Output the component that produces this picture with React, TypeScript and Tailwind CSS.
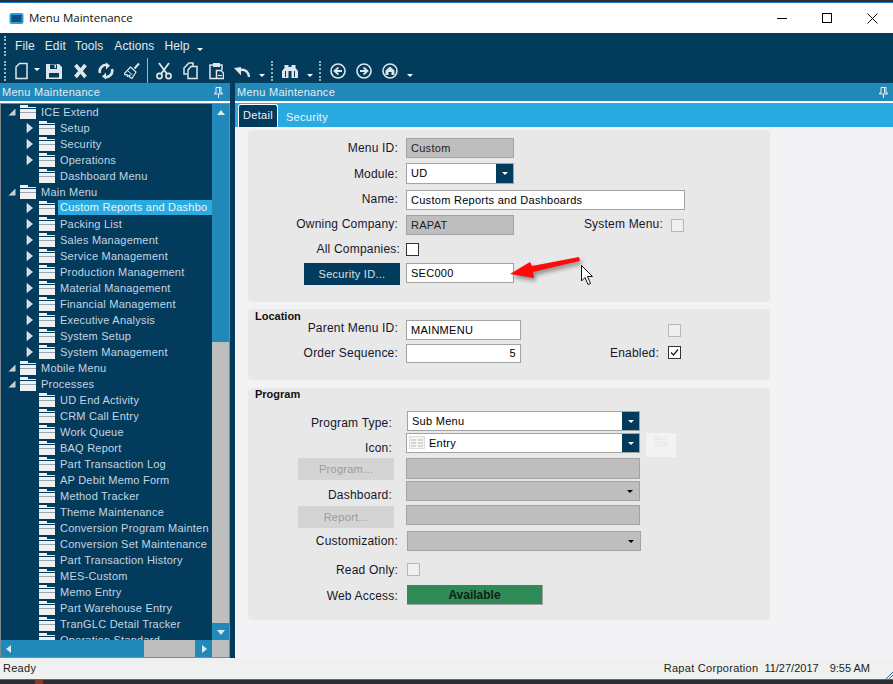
import React from "react";

const Caret = ({ cls = "border-t-white" }: { cls?: string }) => (
  <span className={`inline-block w-0 h-0 border-l-[3px] border-r-[3px] border-t-[3px] border-l-transparent border-r-transparent ${cls}`} />
);

const Grip = () => <span className="w-[2px] h-[20px] border-l-2 border-dotted border-[#9fb3bf] shrink-0" />;

const Folder = () => (
  <svg width="16" height="16" viewBox="0 0 16 16" className="shrink-0">
    <path d="M0 1h8v2H16v1H0z" fill="#eef0f2" />
    <rect x="0" y="5" width="16" height="3" fill="#eef0f2" />
    <rect x="0" y="8" width="16" height="1" fill="#9aa5ad" />
    <rect x="0" y="9" width="16" height="6" fill="#eef0f2" />
  </svg>
);

const Expand = () => (
  <svg width="7" height="10" viewBox="0 0 7 10" className="shrink-0">
    <path d="M1 0.5 L6.5 5 L1 9.5 Z" fill="#d8dde0" stroke="#ffffff" strokeWidth="0.6" />
  </svg>
);
const Collapse = () => (
  <svg width="8" height="8" viewBox="0 0 8 8" className="shrink-0">
    <path d="M7.5 0.5 V7.5 H0.5 Z" fill="#c9ced2" />
  </svg>
);

type Node = { t: string; lvl: 0 | 1; exp?: boolean; sel?: boolean };
const tree: Node[] = [
  { t: "ICE Extend", lvl: 0 },
  { t: "Setup", lvl: 1, exp: true },
  { t: "Security", lvl: 1, exp: true },
  { t: "Operations", lvl: 1, exp: true },
  { t: "Dashboard Menu", lvl: 1 },
  { t: "Main Menu", lvl: 0 },
  { t: "Custom Reports and Dashbo", lvl: 1, exp: true, sel: true },
  { t: "Packing List", lvl: 1, exp: true },
  { t: "Sales Management", lvl: 1, exp: true },
  { t: "Service Management", lvl: 1, exp: true },
  { t: "Production Management", lvl: 1, exp: true },
  { t: "Material Management", lvl: 1, exp: true },
  { t: "Financial Management", lvl: 1, exp: true },
  { t: "Executive Analysis", lvl: 1, exp: true },
  { t: "System Setup", lvl: 1, exp: true },
  { t: "System Management", lvl: 1, exp: true },
  { t: "Mobile Menu", lvl: 0 },
  { t: "Processes", lvl: 0 },
  { t: "UD End Activity", lvl: 1 },
  { t: "CRM Call Entry", lvl: 1 },
  { t: "Work Queue", lvl: 1 },
  { t: "BAQ Report", lvl: 1 },
  { t: "Part Transaction Log", lvl: 1 },
  { t: "AP Debit Memo Form", lvl: 1 },
  { t: "Method Tracker", lvl: 1 },
  { t: "Theme Maintenance", lvl: 1 },
  { t: "Conversion Program Mainten", lvl: 1 },
  { t: "Conversion Set Maintenance", lvl: 1 },
  { t: "Part Transaction History", lvl: 1 },
  { t: "MES-Custom", lvl: 1 },
  { t: "Memo Entry", lvl: 1 },
  { t: "Part Warehouse Entry", lvl: 1 },
  { t: "TranGLC Detail Tracker", lvl: 1 },
  { t: "Operation Standard", lvl: 1 },
];

const TreeRow = ({ n }: { n: Node }) => (
  <div className="h-[16px] flex items-center shrink-0 relative">
    {n.lvl === 0 ? (
      <>
        <span className="w-[19px] pl-[7px] flex shrink-0"><Collapse /></span>
        <Folder />
        <span className="ml-[5px] whitespace-nowrap">{n.t}</span>
      </>
    ) : (
      <>
        <span className="w-[38px] pl-[25px] flex shrink-0">{n.exp && <Expand />}</span>
        <Folder />
        {n.sel ? (
          <span className="ml-[3px] pl-[2px] flex-1 h-[15px] leading-[14px] mb-[1px] bg-[#29abe2] text-[#f4f4f4] whitespace-nowrap overflow-hidden">{n.t}</span>
        ) : (
          <span className="ml-[5px] whitespace-nowrap">{n.t}</span>
        )}
      </>
    )}
  </div>
);

const Pin = () => (
  <svg width="9" height="11" viewBox="0 0 9 11" className="shrink-0">
    <path d="M2 0.5h5v5.5h1.5v1H0.5v-1H2z M4.5 7v4 M5.5 1v5" fill="none" stroke="#e6eef3" strokeWidth="1" />
  </svg>
);

const Tri = ({ d }: { d: "u" | "d" | "l" | "r" }) => {
  const p = { u: "M0 6 L4 1 L8 6 Z", d: "M0 2 L8 2 L4 7 Z", l: "M6 0 L6 8 L1 4 Z", r: "M2 0 L2 8 L7 4 Z" }[d];
  return <svg width="8" height="8" viewBox="0 0 8 8"><path d={p} fill="#dfe8ed" /></svg>;
};

const Label = ({ children, w, className = "" }: { children: React.ReactNode; w: string; className?: string }) => (
  <span className={`${w} text-right shrink-0 whitespace-nowrap text-[12px] tracking-[0.2px] text-[#16162a] ${className}`}>{children}</span>
);

const Box = ({ children, className = "" }: { children?: React.ReactNode; className?: string }) => (
  <div className={`border-[1px] border-[#a3a3a3] flex items-center pl-[4px] box-border shrink-0 ${className}`}>{children}</div>
);

const DdBtn = () => (
  <span className="ml-auto w-[17px] self-stretch bg-[#033b5c] flex items-center justify-center shrink-0"><Caret /></span>
);

const Check = ({ className = "", on = false, dis = false }: { className?: string; on?: boolean; dis?: boolean }) => (
  <span className={`w-[13px] h-[13px] box-border border flex items-center justify-center shrink-0 ${dis ? "border-[#b8b8b8] bg-[#efefef]" : "border-[#333] bg-white"} ${className}`}>
    {on && (
      <svg width="9" height="9" viewBox="0 0 9 9"><path d="M1 4.5 L3.5 7 L8 1.5" fill="none" stroke="#222" strokeWidth="1.3" /></svg>
    )}
  </span>
);

const C = "#dfe6ea";
const Ico = ({ w, ml, children }: { w: number; ml: string; children: React.ReactNode }) => (
  <svg width={w} height="18" viewBox={`0 0 ${w} 18`} className={`shrink-0 ${ml}`}>{children}</svg>
);

const Ring = ({ children, ml }: { children: React.ReactNode; ml: string }) => (
  <Ico w={16} ml={ml}>
    <circle cx="8" cy="9" r="7" fill="none" stroke={C} strokeWidth="1.6" />
    {children}
  </Ico>
);

export default function App() {
  return (
    <div className="w-[893px] h-[684px] overflow-hidden flex flex-col relative bg-[#f3f3f5] text-[11px] tracking-[0.28px]" style={{ fontFamily: '"Liberation Sans", Arial, sans-serif' }}>
      <div className="h-[2px] bg-[#2b2f33] shrink-0" />
      <div className="h-[1px] bg-[#1e78c8] shrink-0" />
      {/* Title bar */}
      <div className="h-[30px] bg-white flex items-center shrink-0 pl-[9px]">
        <svg width="15" height="13" viewBox="0 0 15 13" className="shrink-0">
          <rect x="0.5" y="1" width="14" height="11" rx="2" fill="#2b9fdc" />
          <rect x="2.5" y="3" width="10" height="7" fill="#0f4f7a" />
        </svg>
        <span className="ml-[5px] text-[11.5px] tracking-normal text-[#111]" style={{ fontFamily: '"Open Sans", sans-serif' }}>Menu Maintenance</span>
        <span className="ml-auto mr-[15px] flex items-center">
          <span className="w-[10px] h-[1px] bg-black" />
          <span className="ml-[35px] w-[10px] h-[10px] border border-black" />
          <svg width="11" height="11" viewBox="0 0 11 11" className="ml-[35px]"><path d="M0.5 0.5 L10.5 10.5 M10.5 0.5 L0.5 10.5" stroke="#111" strokeWidth="1" /></svg>
        </span>
      </div>
      {/* Menu + toolbar */}
      <div className="h-[50px] bg-[#033b5c] shrink-0 flex flex-col text-[#e4e9ec]">
        <div className="h-[25px] flex items-center pl-[4px] text-[12px] tracking-[0.1px]">
          <Grip />
          <span className="ml-[9px]">File</span>
          <span className="ml-[10px]">Edit</span>
          <span className="ml-[9px]">Tools</span>
          <span className="ml-[11px]">Actions</span>
          <span className="ml-[10px]">Help</span>
          <span className="ml-[7px] mt-[7px] flex"><Caret /></span>
        </div>
        <div className="h-[25px] flex items-center pl-[4px]">
          <Grip />
          {/* New */}
          <Ico w={13} ml="ml-[9px]"><path d="M4.5 1.5 H12 V16.5 H1 V5 Z" fill="none" stroke={C} strokeWidth="1.5" /></Ico>
          <span className="ml-[6px] mb-[3px] flex"><Caret /></span>
          {/* Save */}
          <Ico w={16} ml="ml-[6px]">
            <path fillRule="evenodd" d="M0 2 H13 L16 5 V17 H0 Z M4 2.5 V7 H11 V2.5 Z M3 11 V15.5 H13 V11 Z" fill={C} />
            <rect x="8.5" y="3" width="1.5" height="3" fill={C} />
          </Ico>
          {/* Delete */}
          <Ico w={13} ml="ml-[12px]"><path d="M1.5 3 L11.5 15 M11.5 3 L1.5 15" stroke={C} strokeWidth="3.6" fill="none" /></Ico>
          {/* Refresh */}
          <Ico w={16} ml="ml-[11px]">
            <path d="M2 11 A6.5 6.5 0 0 1 9 2.8" fill="none" stroke={C} strokeWidth="2.6" />
            <path d="M8 0.5 L12 3.5 L8 7.5 Z" fill={C} />
            <path d="M14 7 A6.5 6.5 0 0 1 7 15.2" fill="none" stroke={C} strokeWidth="2.6" />
            <path d="M8 17.5 L4 14.5 L8 10.5 Z" fill={C} />
          </Ico>
          {/* Brush */}
          <Ico w={16} ml="ml-[10px]">
            <path d="M10.5 6.5 L15 1.5" stroke={C} strokeWidth="2" />
            <path d="M6.5 5 L12 10 L8 16.5 L5.5 15 L6 13 L3.5 14.5 L3 12.5 L1 13 L0.5 11.5 Z" fill="none" stroke={C} strokeWidth="1.2" strokeLinejoin="round" />
            <path d="M4 9 L8.5 13" stroke={C} strokeWidth="1" />
          </Ico>
          <span className="w-[1px] h-[25px] bg-[#9fb3bf] ml-[7px]" />
          {/* Cut */}
          <Ico w={16} ml="ml-[8px]">
            <path d="M3 1 L11 12 M13 1 L5 12" stroke={C} strokeWidth="1.8" fill="none" />
            <circle cx="3.5" cy="14" r="2.6" fill="none" stroke={C} strokeWidth="1.6" />
            <circle cx="12.5" cy="14" r="2.6" fill="none" stroke={C} strokeWidth="1.6" />
          </Ico>
          {/* Copy */}
          <Ico w={15} ml="ml-[11px]">
            <path d="M4 12 H1 V6 L6 1 H10 V4" fill="none" stroke={C} strokeWidth="1.5" />
            <path d="M8 4.5 H14 V16.5 H5 V8 Z" fill="none" stroke={C} strokeWidth="1.5" />
          </Ico>
          {/* Paste */}
          <Ico w={15} ml="ml-[11px]">
            <path d="M4 3 H1 V16.5 H7 M11 3 H13 V8" fill="none" stroke={C} strokeWidth="1.5" />
            <rect x="4" y="1" width="7" height="4" fill={C} />
            <path d="M7.5 8.5 H12 L14.5 11 V16.5 H7.5 Z" fill="none" stroke={C} strokeWidth="1.5" />
            <path d="M9 13.5 H13" stroke={C} strokeWidth="1.2" />
          </Ico>
          {/* Undo */}
          <Ico w={16} ml="ml-[10px]">
            <path d="M15 15 C14.5 8.5 9 6 4.5 9" fill="none" stroke={C} strokeWidth="2.4" />
            <path d="M0 6 L7 5 L7 13.5 Z" fill={C} />
          </Ico>
          <span className="ml-[9px] mt-[10px] flex"><Caret /></span>
          <span className="ml-[6px] flex"><Grip /></span>
          {/* Find */}
          <Ico w={16} ml="ml-[9px]">
            <path fillRule="evenodd" d="M2.5 3 H6.5 V5 H9.5 V3 H13.5 V6 L16 9 V16 H9.5 V9 H6.5 V16 H0 V9 L2.5 6 Z" fill={C} />
            <path d="M3.5 9 V15 M12.5 9 V15" stroke="#033b5c" strokeWidth="1" />
          </Ico>
          <span className="ml-[9px] mt-[10px] flex"><Caret /></span>
          <span className="ml-[6px] flex"><Grip /></span>
          <Ring ml="ml-[9px]"><path d="M12 9 H6 M8.5 5.5 L4.5 9 L8.5 12.5" fill="none" stroke={C} strokeWidth="1.8" /></Ring>
          <Ring ml="ml-[10px]"><path d="M4 9 H10 M7.5 5.5 L11.5 9 L7.5 12.5" fill="none" stroke={C} strokeWidth="1.8" /></Ring>
          <Ring ml="ml-[10px]"><path d="M8 4.5 L12.5 8.5 V13 H9.5 V10 H6.5 V13 H3.5 V8.5 Z" fill={C} /></Ring>
          <span className="ml-[9px] mt-[10px] flex"><Caret /></span>
        </div>
      </div>
      {/* Main */}
      <div className="flex-1 min-h-0 flex bg-[#033b5c]">
        {/* Left panel */}
        <div className="w-[230px] flex flex-col shrink-0">
          <div className="h-[18px] bg-[#2089b9] flex items-center pl-[2px] pr-[7px] text-[#e6eef3] shrink-0">
            <span>Menu Maintenance</span>
            <span className="ml-auto flex"><Pin /></span>
          </div>
          <div className="h-[2px] bg-white shrink-0" />
          <div className="flex-1 min-h-0 border-[1px] border-[#7d8a92] bg-[#033b5c] flex flex-col">
            <div className="flex-1 min-h-0 flex">
              <div className="w-[211px] flex flex-col overflow-hidden text-[#c3d6e2] tracking-[0.22px]">
                {tree.map((n) => <TreeRow key={n.t} n={n} />)}
              </div>
              <div className="w-[17px] flex flex-col shrink-0">
                <div className="h-[17px] bg-[#2089b9] flex items-center justify-center shrink-0"><Tri d="u" /></div>
                <div className="h-[221px] bg-[#2089b9] shrink-0" />
                <div className="flex-1 bg-[#bebebe]" />
                <div className="h-[17px] bg-[#2089b9] flex items-center justify-center shrink-0"><Tri d="d" /></div>
              </div>
            </div>
            <div className="h-[17px] flex shrink-0">
              <div className="w-[15px] bg-[#2089b9] flex items-center justify-center"><Tri d="l" /></div>
              <div className="w-[128px] bg-[#2089b9]" />
              <div className="w-[51px] bg-[#bebebe]" />
              <div className="w-[17px] bg-[#2089b9] flex items-center justify-center"><Tri d="r" /></div>
              <div className="flex-1 bg-[#bebebe]" />
            </div>
          </div>
        </div>
        <div className="w-[5px] shrink-0" />
        {/* Right panel */}
        <div className="flex-1 min-w-0 flex flex-col">
          <div className="h-[18px] bg-[#2089b9] flex items-center pl-[2px] pr-[5px] text-[#e6eef3] shrink-0">
            <span>Menu Maintenance</span>
            <span className="ml-auto flex"><Pin /></span>
          </div>
          <div className="h-[2px] bg-white shrink-0" />
          <div className="h-[24px] bg-[#29abe2] flex items-end pl-[3px] shrink-0">
            <span className="h-[23px] w-[40px] bg-[#033b5c] border border-b-0 border-white rounded-t-[3px] flex items-center justify-center text-[#eaf3f8] pb-[2px]">Detail</span>
            <span className="ml-[8px] h-[20px] flex items-center text-[#eaf6fc]">Security</span>
          </div>
          {/* Content */}
          <div className="flex-1 min-h-0 bg-[#f3f3f5] pl-[13px] pt-[3px]">
            {/* Panel 1 */}
            <div className="w-[522px] h-[172px] bg-[#e8e8e8] rounded-[4px] pt-[8px] flex flex-col">
              <div className="h-[20px] flex items-center">
                <Label w="w-[150px]">Menu ID:</Label>
                <Box className="ml-[8px] w-[108px] h-[20px] bg-[#bebebe] text-[#222]">Custom</Box>
              </div>
              <div className="h-[21px] flex items-center mt-[5px]">
                <Label w="w-[150px]">Module:</Label>
                <Box className="ml-[8px] w-[108px] h-[21px] bg-white text-black !pr-0">UD<DdBtn /></Box>
              </div>
              <div className="h-[20px] flex items-center mt-[6px]">
                <Label w="w-[150px]" className="pb-[2px]">Name:</Label>
                <Box className="ml-[8px] w-[279px] h-[20px] bg-white text-black">Custom Reports and Dashboards</Box>
              </div>
              <div className="h-[20px] flex items-center mt-[5px]">
                <Label w="w-[150px]" className="pb-[2px]">Owning Company:</Label>
                <Box className="ml-[8px] w-[108px] h-[20px] bg-[#bebebe] text-[#222]">RAPAT</Box>
                <Label w="w-[149px]" className="pb-[2px]">System Menu:</Label>
                <Check dis className="ml-[8px]" />
              </div>
              <div className="h-[13px] flex items-center mt-[8px]">
                <Label w="w-[152px]" className="pb-[2px]">All Companies:</Label>
                <Check className="ml-[6px]" />
              </div>
              <div className="h-[22px] flex items-start mt-[7px]">
                <span className="ml-[56px] w-[96px] h-[22px] bg-[#033b5c] text-[#d7e2e9] flex items-center justify-center">Security ID...</span>
                <Box className="ml-[6px] w-[108px] h-[20px] bg-white text-black">SEC000</Box>
              </div>
            </div>
            {/* Panel 2 */}
            <div className="w-[522px] h-[71px] bg-[#e8e8e8] rounded-[4px] mt-[7px]">
              <div className="h-[14px] pl-[7px] font-bold leading-[14px] text-[#111] tracking-normal">Location</div>
              <div className="h-[20px] flex items-center mt-[-3px]">
                <Label w="w-[150px]" className="pb-[4px]">Parent Menu ID:</Label>
                <Box className="ml-[8px] w-[115px] h-[20px] bg-white text-black">MAINMENU</Box>
                <Check dis className="ml-[147px]" />
              </div>
              <div className="h-[19px] flex items-center mt-[4px]">
                <Label w="w-[150px]" className="pb-[2px]">Order Sequence:</Label>
                <Box className="ml-[8px] w-[115px] h-[19px] bg-white text-black justify-end pr-[4px]">5</Box>
                <Label w="w-[138px]" className="pb-[2px]">Enabled:</Label>
                <Check on className="ml-[9px] mb-[2px]" />
              </div>
            </div>
            {/* Panel 3 */}
            <div className="w-[522px] h-[232px] bg-[#e8e8e8] rounded-[4px] mt-[8px] flex flex-col">
              <div className="h-[14px] pl-[7px] font-bold leading-[12px] text-[#111] tracking-normal">Program</div>
              <div className="h-[20px] flex items-start mt-[9px]">
                <Label w="w-[144px]" className="pt-[3px]">Program Type:</Label>
                <Box className="ml-[15px] w-[233px] h-[20px] bg-white text-black !pr-0">Sub Menu<DdBtn /></Box>
              </div>
              <div className="h-[24px] flex items-start mt-[2px]">
                <Label w="w-[144px]" className="pt-[6px]">Icon:</Label>
                <Box className="ml-[14px] w-[234px] h-[20px] bg-white text-black !pl-[2px] !pr-0">
                  <svg width="16" height="14" viewBox="0 0 16 14" className="shrink-0"><rect x="0.5" y="0.5" width="15" height="12" fill="#f4f4f4" stroke="#ddd" /><path d="M2 4h5M2 7h5M2 10h5M9 4h5M9 7h5M9 10h5" stroke="#bbb" /></svg>
                  <span className="ml-[4px]">Entry</span>
                  <DdBtn />
                </Box>
                <div className="ml-[6px] w-[30px] h-[24px] bg-[#f3f3f5] flex items-start justify-center pt-[2px] shrink-0">
                  <svg width="16" height="14" viewBox="0 0 16 14"><path d="M1 1h6l1 2h6v2H1z M1 6h15l-2 6H2z" fill="#ececee" /></svg>
                </div>
              </div>
              <div className="h-[22px] flex items-start mt-[1px]">
                <span className="ml-[50px] w-[96px] h-[22px] bg-[#d4d4d4] text-[#9a9a9a] flex items-center justify-center">Program...</span>
                <Box className="ml-[12px] w-[234px] h-[21px] bg-[#bebebe]" />
              </div>
              <div className="h-[20px] flex items-center mt-[1px]">
                <Label w="w-[144px]" className="pt-[7px]">Dashboard:</Label>
                <Box className="ml-[14px] w-[234px] h-[20px] bg-[#bebebe] !pr-[6px]"><span className="ml-auto flex"><Caret cls="border-t-black" /></span></Box>
              </div>
              <div className="h-[22px] flex items-start mt-[5px]">
                <span className="ml-[50px] w-[96px] h-[22px] bg-[#d4d4d4] text-[#9a9a9a] flex items-center justify-center">Report...</span>
                <Box className="ml-[12px] w-[234px] h-[20px] bg-[#bebebe] -mt-[1px]" />
              </div>
              <div className="h-[20px] flex items-center mt-[3px]">
                <Label w="w-[150px]">Customization:</Label>
                <Box className="ml-[9px] w-[234px] h-[20px] bg-[#bebebe] !pr-[6px]"><span className="ml-auto flex"><Caret cls="border-t-black" /></span></Box>
              </div>
              <div className="h-[13px] flex items-center mt-[12px]">
                <Label w="w-[150px]" className="pt-[1px]">Read Only:</Label>
                <Check dis className="ml-[9px]" />
              </div>
              <div className="h-[20px] flex items-center mt-[9px]">
                <Label w="w-[150px]" className="pt-[2px]">Web Access:</Label>
                <span className="ml-[9px] w-[136px] h-[20px] bg-[#2e8b57] border-r-[1px] border-b-[1px] border-[#a3a3a3] flex items-center justify-center font-bold text-[12px] text-[#10201a] tracking-normal">Available</span>
              </div>
            </div>
          </div>
        </div>
      </div>
      {/* Status bar */}
      <div className="h-[21px] bg-[#f0f0f0] flex items-center pl-[3px] pr-[23px] text-[#222] shrink-0 relative">
        <span>Ready</span>
        <span className="ml-auto">Rapat Corporation</span>
        <span className="ml-[6px] tracking-[0px]">11/27/2017</span>
        <span className="ml-[11px] tracking-[0px]">9:55 AM</span>
        <svg width="7" height="7" viewBox="0 0 7 7" className="absolute right-0 bottom-0"><path d="M0 7 L7 0 M3 7 L7 3" stroke="#2a6f96" strokeWidth="1" /></svg>
      </div>
      <div className="h-[1px] bg-[#1e78c8] shrink-0" />
      <div className="h-[4px] bg-[#2b2f33] shrink-0 flex">
        <span className="ml-[35px] w-[8px] bg-[#8a3a1e]" />
      </div>
      {/* Annotation overlay */}
      <svg width="84" height="44" viewBox="0 0 84 44" className="absolute left-[505px] top-[250px]" style={{ filter: "drop-shadow(2px 3px 2px rgba(0,0,0,0.4))" }}>
        <path d="M5 24 L25 12 L27 16 L74 7 L75 11 L28 22 L29 28 Z" fill="#ff0a0a" />
      </svg>
      <svg width="16" height="24" viewBox="0 0 16 24" className="absolute left-[580px] top-[264px]">
        <path d="M1.5 1.5 V17 L5 13.5 L8 20.5 L10.5 19.5 L7.5 12.5 H12.5 Z" fill="#fff" stroke="#111" strokeWidth="1" />
      </svg>
    </div>
  );
}
